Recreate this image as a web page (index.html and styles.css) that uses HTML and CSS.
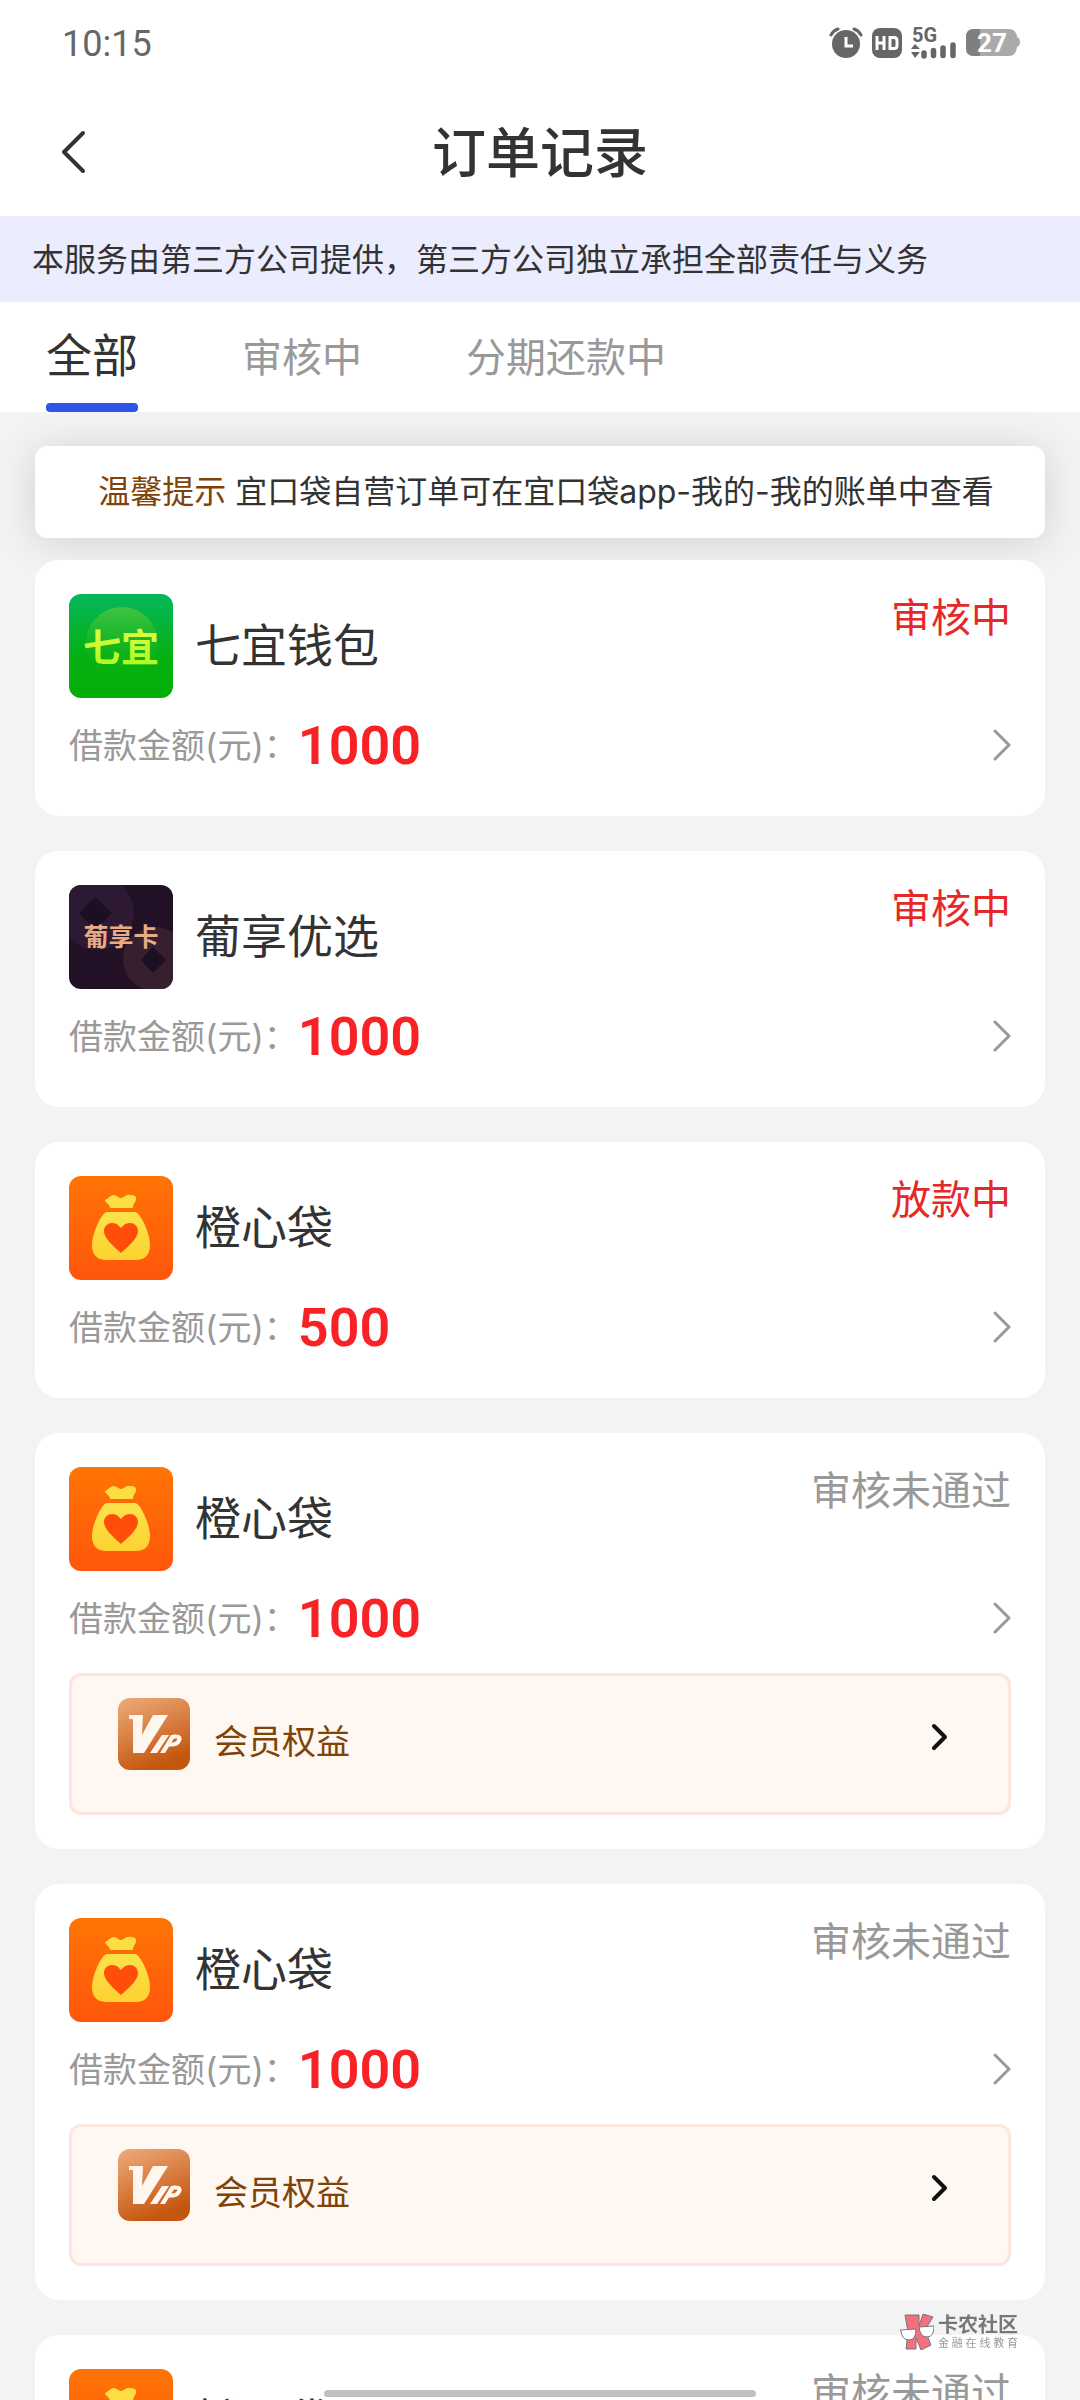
FILE: index.html
```html
<!DOCTYPE html>
<html lang="zh-CN">
<head>
<meta charset="utf-8">
<meta name="viewport" content="width=device-width, initial-scale=1">
<title>订单记录</title>
<link rel="stylesheet" href="styles.css">
</head>
<body>
<svg class="sprite" aria-hidden="true">
  <defs>
    <linearGradient id="g-green" x1="0" y1="0" x2="0" y2="1"><stop offset="0" stop-color="#04b85c"/><stop offset=".6" stop-color="#06b012"/><stop offset="1" stop-color="#04ae08"/></linearGradient>
    <linearGradient id="g-halo" x1="0" y1="0" x2="0" y2="1"><stop offset="0" stop-color="#5cc83c" stop-opacity=".7"/><stop offset="1" stop-color="#10b010" stop-opacity="0"/></linearGradient>
    <linearGradient id="g-lime" x1="0" y1="0" x2="0" y2="1"><stop offset="0" stop-color="#f4fb4a"/><stop offset="1" stop-color="#a2fb1e"/></linearGradient>
    <linearGradient id="g-orange" x1="0" y1="0" x2="0" y2="1"><stop offset="0" stop-color="#ff7505"/><stop offset="1" stop-color="#ff560c"/></linearGradient>
    <linearGradient id="g-gold" x1="0" y1="0" x2="0" y2="1"><stop offset="0" stop-color="#fbe34c"/><stop offset="1" stop-color="#fdd230"/></linearGradient>
    <linearGradient id="g-vip" x1="0" y1="0" x2=".4" y2="1"><stop offset="0" stop-color="#eeac7c"/><stop offset="1" stop-color="#c4570f"/></linearGradient>
  </defs>
  <symbol id="logo-bag" viewBox="0 0 104 104">
    <rect width="104" height="104" fill="url(#g-orange)"/>
    <path d="M36 24c3-1 5-5 9-5 3 0 4 3 7 3s5-4 9-3c4 0 7 1 6 5-1 3-3 4-3 8H41c0-4-5-5-5-8z" fill="#fbdf42"/>
    <path d="M38 36h28c5 0 15 21 15 33 0 11-6 15-15 15H38c-9 0-15-4-15-15 0-12 10-33 15-33z" fill="url(#g-gold)"/>
    <path d="M52 77C44 70 35 62 35 55c0-5 4-8 8-8 5 0 7 3 9 5 2-2 4-5 9-5 4 0 8 3 8 8 0 7-9 15-17 22z" fill="#ff4d0a"/>
  </symbol>
  <symbol id="logo-vip" viewBox="0 0 72 72">
    <rect width="72" height="72" rx="12" fill="url(#g-vip)"/>
    <path d="M11 17h14l-1 20 11-20h15L26 55H15V21h-4z" fill="#fff7ef"/>
    <path d="M44 37h7L39 55h-7z" fill="#fff7ef"/>
    <path d="M55 38.500h3q5 0 3 4-2 4-7 4h-3" fill="none" stroke="#fff7ef" stroke-width="4"/>
    <path d="M53 37h5L47 55h-5z" fill="#fff7ef"/>
  </symbol>
  <symbol id="arrow" viewBox="0 0 18 32">
    <path d="M2 2 16 16 2 30" fill="none" stroke="currentColor" stroke-width="3" stroke-linecap="round" stroke-linejoin="round"/>
  </symbol>
  <symbol id="arrow-bold" viewBox="0 0 18 28">
    <path d="M4 3 15 14 4 25" fill="none" stroke="currentColor" stroke-width="4" stroke-linecap="round" stroke-linejoin="round"/>
  </symbol>
</svg>

<div class="app">
  <header class="top">
    <div class="status-bar">
      <time>10:15</time>
      <div class="status-icons">
        <svg width="34" height="32" viewBox="0 0 34 32">
          <circle cx="17" cy="17" r="14" fill="#666"/>
          <path d="M2 8a12 12 0 0 1 7-6M32 8a12 12 0 0 0-7-6" fill="none" stroke="#666" stroke-width="3" stroke-linecap="round"/>
          <path d="M17 10v9h7" fill="none" stroke="#fff" stroke-width="3"/>
        </svg>
        <svg width="30" height="30" viewBox="0 0 30 30">
          <rect width="30" height="30" rx="8" fill="#666"/>
          <path d="M5 8v14M12 8v14M5 15h7M18 9.500h4q3 0 3 3v5q0 3-3 3h-4z" fill="none" stroke="#fff" stroke-width="3"/>
        </svg>
        <svg width="46" height="46" viewBox="0 -8 46 46">
          <text x="1" y="14" class="signal-text">5G</text>
          <path d="M0 21l4-5 5 5zM0 24h9l-5 6z" fill="#666"/>
          <path d="M13 25v3M22.500 22.500v5M32 20v7.500M42 17v10.500" stroke="#666" stroke-width="5.500" stroke-linecap="round"/>
        </svg>
        <svg width="54" height="28" viewBox="0 0 54 28">
          <path d="M8 0h35q7 0 8 8 3 1 3 5t-3 5q-1 9-8 9H8q-8 0-8-8V8q0-8 8-8z" fill="#aaa"/>
          <path d="M8 0h6v27H8q-8 0-8-8V8q0-8 8-8z" fill="#7f7f7f"/>
          <text x="26" y="23" text-anchor="middle" class="battery-text">27</text>
        </svg>
      </div>
    </div>
    <div class="nav-bar">
      <button class="back" type="button" aria-label="返回">
        <svg width="26" height="44" viewBox="0 0 26 44"><path d="M23 3 4 22 23 41" fill="none" stroke="#333" stroke-width="4" stroke-linecap="round" stroke-linejoin="round"/></svg>
      </button>
      <h1>订单记录</h1>
    </div>
  </header>

  <p class="provider">本服务由第三方公司提供，第三方公司独立承担全部责任与义务</p>

  <nav class="tabs">
    <button class="tab tab-active" type="button">全部</button>
    <button class="tab" type="button">审核中</button>
    <button class="tab" type="button">分期还款中</button>
  </nav>

  <main class="orders">
    <p class="notice"><strong>温馨提示</strong> 宜口袋自营订单可在宜口袋app-我的-我的账单中查看</p>

    <article class="card">
      <div class="card-head">
        <svg class="logo" viewBox="0 0 104 104">
          <rect width="104" height="104" fill="url(#g-green)"/>
          <circle cx="53" cy="49" r="36" fill="url(#g-halo)"/>
          <text x="52" y="67" text-anchor="middle" class="logo-text-lg" fill="url(#g-lime)">七宜</text>
        </svg>
        <h2>七宜钱包</h2>
        <span class="state state-live">审核中</span>
      </div>
      <a class="amount-row" href="#"><span class="label">借款金额(元)：</span><b>1000</b><svg class="arrow"><use href="#arrow"/></svg></a>
    </article>

    <article class="card">
      <div class="card-head">
        <svg class="logo" viewBox="0 0 104 104">
          <rect width="104" height="104" fill="#221126"/>
          <circle cx="28" cy="28" r="37" fill="#2d1a32"/>
          <circle cx="86" cy="74" r="32" fill="#36202f"/>
          <path d="M26 12 43 28 26 45 10 28z" fill="#1d0f22"/>
          <path d="M84 62 97 75 84 88 72 75z" fill="#1d0f22"/>
          <text x="52" y="61" text-anchor="middle" class="logo-text-sm" fill="#e8ab83">葡享卡</text>
        </svg>
        <h2>葡享优选</h2>
        <span class="state state-live">审核中</span>
      </div>
      <a class="amount-row" href="#"><span class="label">借款金额(元)：</span><b>1000</b><svg class="arrow"><use href="#arrow"/></svg></a>
    </article>

    <article class="card">
      <div class="card-head">
        <svg class="logo"><use href="#logo-bag"/></svg>
        <h2>橙心袋</h2>
        <span class="state state-live">放款中</span>
      </div>
      <a class="amount-row" href="#"><span class="label">借款金额(元)：</span><b>500</b><svg class="arrow"><use href="#arrow"/></svg></a>
    </article>

    <article class="card">
      <div class="card-head">
        <svg class="logo"><use href="#logo-bag"/></svg>
        <h2>橙心袋</h2>
        <span class="state">审核未通过</span>
      </div>
      <a class="amount-row" href="#"><span class="label">借款金额(元)：</span><b>1000</b><svg class="arrow"><use href="#arrow"/></svg></a>
      <a class="vip" href="#"><svg class="vip-logo"><use href="#logo-vip"/></svg><span>会员权益</span><svg class="vip-arrow"><use href="#arrow-bold"/></svg></a>
    </article>

    <article class="card">
      <div class="card-head">
        <svg class="logo"><use href="#logo-bag"/></svg>
        <h2>橙心袋</h2>
        <span class="state">审核未通过</span>
      </div>
      <a class="amount-row" href="#"><span class="label">借款金额(元)：</span><b>1000</b><svg class="arrow"><use href="#arrow"/></svg></a>
      <a class="vip" href="#"><svg class="vip-logo"><use href="#logo-vip"/></svg><span>会员权益</span><svg class="vip-arrow"><use href="#arrow-bold"/></svg></a>
    </article>

    <article class="card">
      <div class="card-head">
        <svg class="logo"><use href="#logo-bag"/></svg>
        <h2>橙心袋</h2>
        <span class="state">审核未通过</span>
      </div>
    </article>
  </main>
</div>

<div class="watermark">
  <svg width="34" height="36" viewBox="0 0 34 36">
    <path d="M5 1h14v11l4-12 10 3-8 13 6 15-10 5-5-12v11H6l2-17z" fill="#f4707c" stroke="#777" stroke-width="1"/>
    <path d="M0 16l16-1q0 11-7 11T1 17zM19 13l15-1q0 11-7 11-7 0-8-10z" fill="#fff" stroke="#777" stroke-width="1"/>
  </svg>
  <div class="watermark-text"><strong>卡农社区</strong><span>金融在线教育</span></div>
</div>
<div class="home-bar"></div>
</body>
</html>
```
FILE: styles.css
```css
* {
  box-sizing: border-box;
}

body,
h1,
h2,
p {
  margin: 0;
}

body {
  background: #f3f3f3;
  color: #333;
  font-family: Inter, "Noto Sans CJK SC", sans-serif;
}

button {
  padding: 0;
  border: 0;
  background: none;
  color: inherit;
  font: inherit;
}

a {
  color: inherit;
  text-decoration: none;
}

svg {
  display: block;
  flex: none;
}

.sprite {
  position: absolute;
  width: 0;
  height: 0;
}

.app {
  display: flex;
  flex-direction: column;
  height: 100vh;
  overflow: hidden;
}

/* status and navigation bars */

.top {
  background: #fff;
}

.status-bar {
  display: flex;
  align-items: center;
  justify-content: space-between;
  height: 88px;
  padding: 0 60px 0 62px;
}

.status-bar time {
  color: #666;
  font-family: Roboto, sans-serif;
  font-size: 36px;
}

.status-icons {
  display: flex;
  align-items: center;
  gap: 9px;
  padding-bottom: 2px;
}

.signal-text {
  fill: #666;
  font: 700 20px Roboto, sans-serif;
}

.battery-text {
  fill: #fff;
  font: 700 26px Roboto, sans-serif;
}

.nav-bar {
  display: grid;
  grid-template-columns: 1fr auto 1fr;
  align-items: center;
  height: 128px;
  padding: 0 60px;
}

.back {
  justify-self: start;
}

h1 {
  padding-top: 4px;
  font-size: 54px;
  font-weight: 500;
  line-height: 80px;
}

.provider {
  padding: 20px 32px 18px;
  background: #ebecfd;
  font-size: 32px;
  line-height: 48px;
}

.tabs {
  display: flex;
  gap: 104px;
  height: 110px;
  padding: 0 46px;
  background: #fff;
}

.tab {
  padding-bottom: 5px;
  color: #999;
  font-size: 40px;
}

.tab-active {
  position: relative;
  padding-bottom: 10px;
  color: #333;
  font-size: 46px;
}

.tab-active::after {
  content: "";
  position: absolute;
  right: 0;
  bottom: 0;
  left: 0;
  height: 9px;
  border-radius: 4px;
  background: #2f55e8;
}

/* order list */

.orders {
  flex: 1;
  min-height: 0;
  padding: 34px 35px 0;
  overflow: hidden;
}

.notice {
  padding: 22px 0 22px 12px;
  border-radius: 12px;
  background: #fff;
  box-shadow: 0 4px 40px rgba(0, 0, 0, 0.14);
  font-size: 32px;
  line-height: 48px;
  text-align: center;
  white-space: nowrap;
}

.notice strong {
  color: #7f4207;
  font-weight: 400;
}

.card {
  position: relative;
  margin-top: 35px;
  padding: 34px;
  border-radius: 24px;
  background: #fff;
}

.notice + .card {
  margin-top: 22px;
}

.card-head {
  display: flex;
  align-items: center;
  gap: 22px;
}

.logo {
  width: 104px;
  height: 104px;
  border-radius: 12px;
}

.logo-text-lg {
  font: 700 38px "Noto Sans CJK SC", sans-serif;
}

.logo-text-sm {
  font: 700 25px "Noto Sans CJK SC", sans-serif;
}

h2 {
  flex: 1;
  padding-bottom: 2px;
  font-size: 46px;
  font-weight: 400;
  line-height: 64px;
}

.state {
  align-self: flex-start;
  color: #999;
  font-size: 40px;
  line-height: 48px;
}

.state-live {
  color: #e62828;
}

.amount-row {
  display: flex;
  align-items: center;
  height: 84px;
  padding: 21px 0 11px;
}

.label {
  padding-bottom: 3px;
  color: #999;
  font-size: 34px;
}

.amount-row b {
  flex: 1;
  color: #f82226;
  font-family: Roboto, sans-serif;
  font-size: 54px;
  font-weight: 600;
}

.arrow {
  width: 18px;
  height: 32px;
  color: #999;
}

.vip {
  display: flex;
  align-items: flex-end;
  gap: 24px;
  height: 142px;
  margin-top: 18px;
  padding: 0 60px 42px 46px;
  border: 3px solid #fce6de;
  border-radius: 12px;
  background: #fff7f1;
  color: #7f4207;
  font-size: 34px;
  line-height: 56px;
}

.vip span {
  flex: 1;
}

.vip-logo {
  width: 72px;
  height: 72px;
}

.vip-arrow {
  width: 18px;
  height: 66px;
  color: #111;
}

/* overlays */

.watermark {
  position: fixed;
  right: 62px;
  bottom: 50px;
  display: flex;
  align-items: center;
  gap: 4px;
  color: #777;
}

.watermark-text {
  display: grid;
}

.watermark strong {
  font-size: 20px;
  line-height: 22px;
}

.watermark span {
  color: #999;
  font-size: 11px;
  line-height: 14px;
  text-align-last: justify;
}

.home-bar {
  position: fixed;
  bottom: 3px;
  left: 30%;
  width: 40%;
  height: 7px;
  border-radius: 4px;
  background: #c0c0c0;
}
```
